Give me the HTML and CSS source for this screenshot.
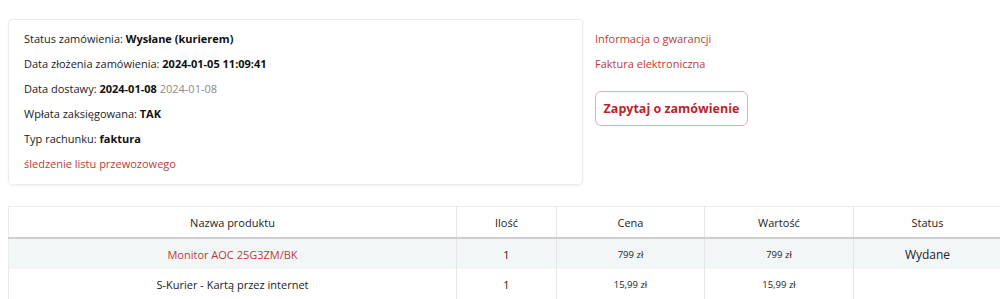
FILE: index.html
```html
<!DOCTYPE html>
<html lang="pl">
<head>
<meta charset="utf-8">
<link rel="stylesheet" href="styles.css">
</head>
<body>
<div class="page">
  <div class="top">
    <div class="card">
      <div class="row">Status zamówienia: <b>Wysłane (kurierem)</b></div>
      <div class="row">Data złożenia zamówienia: <b>2024-01-05 11:09:41</b></div>
      <div class="row">Data dostawy: <b>2024-01-08</b> <span class="muted">2024-01-08</span></div>
      <div class="row">Wpłata zaksięgowana: <b>TAK</b></div>
      <div class="row">Typ rachunku: <b>faktura</b></div>
      <div class="row"><a class="link" href="#">śledzenie listu przewozowego</a></div>
    </div>
    <div class="side">
      <div class="row"><a class="link" href="#">Informacja o gwarancji</a></div>
      <div class="row"><a class="link" href="#">Faktura elektroniczna</a></div>
      <button class="btn">Zapytaj o zamówienie</button>
    </div>
  </div>
  <table class="products">
    <thead>
      <tr>
        <th class="c-name">Nazwa produktu</th>
        <th class="c-qty">Ilość</th>
        <th class="c-price">Cena</th>
        <th class="c-value">Wartość</th>
        <th class="c-status">Status</th>
      </tr>
    </thead>
    <tbody>
      <tr class="alt">
        <td><a class="link" href="#">Monitor AOC 25G3ZM/BK</a></td>
        <td>1</td>
        <td class="money">799 zł</td>
        <td class="money">799 zł</td>
        <td class="status">Wydane</td>
      </tr>
      <tr>
        <td>S-Kurier - Kartą przez internet</td>
        <td>1</td>
        <td class="money">15,99 zł</td>
        <td class="money">15,99 zł</td>
        <td class="status"></td>
      </tr>
    </tbody>
  </table>
</div>
</body>
</html>
```
FILE: styles.css
```css
html, body {
  margin: 0;
  padding: 0;
  background: #fff;
  overflow: hidden;
}
body {
  font-family: "Open Sans", "Liberation Sans", sans-serif;
  font-size: 11px;
  color: #222;
}
.page {
  padding: 19px 0 0 8px;
}
.top {
  display: flex;
  gap: 12px;
  align-items: flex-start;
}
.card {
  width: 575px;
  box-sizing: border-box;
  padding: 6px 15px 8px;
  border: 1px solid #ececec;
  border-radius: 4px;
  box-shadow: 0 1px 3px rgba(0,0,0,0.05);
}
.row {
  line-height: 25px;
  height: 25px;
}
.row b {
  font-weight: 700;
  color: #111;
}
.muted {
  color: #8a8a8a;
}
.link {
  color: #c0393b;
  text-decoration: none;
}
.side {
  padding-top: 7px;
  display: flex;
  flex-direction: column;
  align-items: flex-start;
}
.btn {
  margin-top: 15px;
  height: 35px;
  width: 153px;
  border: 1px solid #e4b0b0;
  border-radius: 6px;
  background: #fff;
  color: #b8252a;
  font-family: inherit;
  font-size: 12.5px;
  font-weight: 700;
  padding: 0;
}
.products {
  margin-top: 21px;
  width: 992px;
  border-collapse: collapse;
  table-layout: fixed;
  border-top: 1px solid #ececec;
}
.products th, .products td {
  text-align: center;
  border-left: 1px solid #e6e6e6;
  padding: 0;
}
.products th:first-child, .products td:first-child {
  border-left: 1px solid #eaeaea;
}
.products th {
  font-weight: 400;
  height: 30px;
  border-bottom: 2px solid #cfcfcf;
  color: #222;
}
.products td {
  height: 30px;
  color: #222;
}
.c-name { width: 447px; }
.c-qty { width: 99px; }
.c-price { width: 147px; }
.c-value { width: 148px; }
.c-status { width: 147px; }
.alt td {
  background: #f2f6f6;
}
.money {
  font-size: 9.5px;
  color: #888;
}
.status {
  font-size: 12px;
}
```
